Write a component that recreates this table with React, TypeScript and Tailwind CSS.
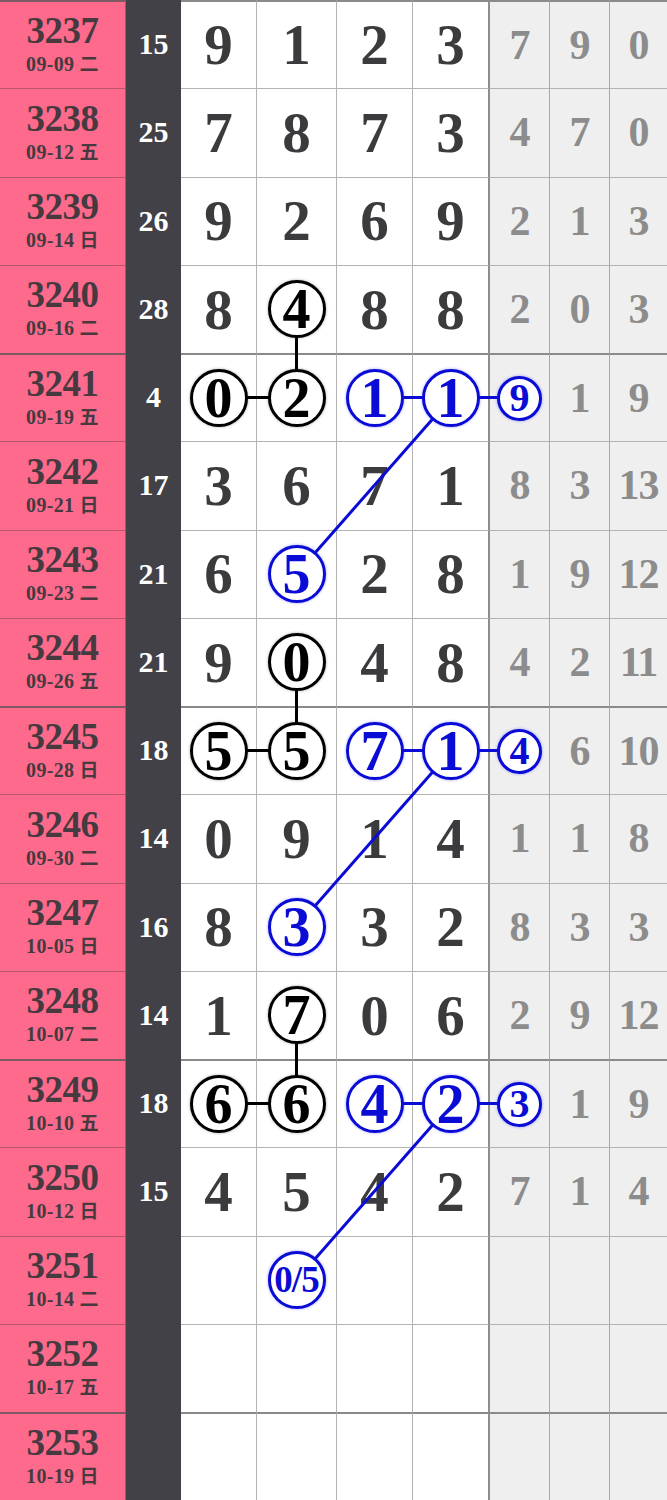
import React from 'react';
import { clsx, type ClassValue } from 'clsx';
import { twMerge } from 'tailwind-merge';

function cn(...inputs: ClassValue[]) {
    return twMerge(clsx(inputs));
}

interface Row {
    id: number;
    d: string;
    w: string;
    s?: number;
    m: string[];
    g: string[];
}

const ROW_H = 88.25;

// k = black circle, b = blue circle
const ROWS: Row[] = [
    { id: 3237, d: '09-09', w: '二', s: 15, m: ['9', '1', '2', '3'], g: ['7', '9', '0'] },
    { id: 3238, d: '09-12', w: '五', s: 25, m: ['7', '8', '7', '3'], g: ['4', '7', '0'] },
    { id: 3239, d: '09-14', w: '日', s: 26, m: ['9', '2', '6', '9'], g: ['2', '1', '3'] },
    { id: 3240, d: '09-16', w: '二', s: 28, m: ['8', 'k4', '8', '8'], g: ['2', '0', '3'] },
    { id: 3241, d: '09-19', w: '五', s: 4, m: ['k0', 'k2', 'b1', 'b1'], g: ['b9', '1', '9'] },
    { id: 3242, d: '09-21', w: '日', s: 17, m: ['3', '6', '7', '1'], g: ['8', '3', '13'] },
    { id: 3243, d: '09-23', w: '二', s: 21, m: ['6', 'b5', '2', '8'], g: ['1', '9', '12'] },
    { id: 3244, d: '09-26', w: '五', s: 21, m: ['9', 'k0', '4', '8'], g: ['4', '2', '11'] },
    { id: 3245, d: '09-28', w: '日', s: 18, m: ['k5', 'k5', 'b7', 'b1'], g: ['b4', '6', '10'] },
    { id: 3246, d: '09-30', w: '二', s: 14, m: ['0', '9', '1', '4'], g: ['1', '1', '8'] },
    { id: 3247, d: '10-05', w: '日', s: 16, m: ['8', 'b3', '3', '2'], g: ['8', '3', '3'] },
    { id: 3248, d: '10-07', w: '二', s: 14, m: ['1', 'k7', '0', '6'], g: ['2', '9', '12'] },
    { id: 3249, d: '10-10', w: '五', s: 18, m: ['k6', 'k6', 'b4', 'b2'], g: ['b3', '1', '9'] },
    { id: 3250, d: '10-12', w: '日', s: 15, m: ['4', '5', '4', '2'], g: ['7', '1', '4'] },
    { id: 3251, d: '10-14', w: '二', m: ['', 'b0/5', '', ''], g: ['', '', ''] },
    { id: 3252, d: '10-17', w: '五', m: ['', '', '', ''], g: ['', '', ''] },
    { id: 3253, d: '10-19', w: '日', m: ['', '', '', ''], g: ['', '', ''] },
];

const MAIN_W = ['w-[76px]', 'w-[80px]', 'w-[76px]', 'w-[77px]'];
const GRAY_W = ['w-[60px]', 'w-[60px]', 'w-[57px]'];

const Circle: React.FC<{ t: string; blue: boolean; small?: boolean }> = ({ t, blue, small }) => (
    <div
        className={cn(
            'relative z-20 flex items-center justify-center rounded-full bg-white border-[3px] leading-none font-bold',
            blue ? 'border-[#0b0bd6] text-[#0b0bd6] shadow-[0_0_3px_rgba(40,40,255,0.45)]' : 'border-black text-black shadow-[0_0_3px_rgba(0,0,0,0.35)]',
            small ? 'w-[45px] h-[45px] text-[40px]' : 'w-[58px] h-[58px] text-[56px]',
            t.length > 1 && 'text-[37px] tracking-[-1px]'
        )}
    >
        {t}
    </div>
);

const Value: React.FC<{ v: string; gray?: boolean; small?: boolean }> = ({ v, gray, small }) => {
    if (!v) return null;
    if (v[0] === 'k' || v[0] === 'b') return <Circle t={v.slice(1)} blue={v[0] === 'b'} small={small} />;
    return (
        <span className={cn('leading-none font-bold', gray ? 'text-[42px] text-[#8c8c8c] tracking-[-1px]' : 'text-[57px] text-[#3b3b3e]')}>
            {v}
        </span>
    );
};

// connector lines drawn over plain digits, under the circles
const Lines: React.FC = () => {
    const x1 = 218.5, x2 = 296.5, x3 = 375, x4 = 451.5, xg = 520;
    const cy = (i: number) => ROW_H * i + 44.5;
    const groups = [4, 8, 12];
    return (
        <svg className="pointer-events-none absolute left-0 top-0 z-10" width="667" height="1500">
            {groups.map(r => (
                <g key={r}>
                    <line x1={x2} y1={cy(r - 1)} x2={x2} y2={cy(r)} stroke="#000" strokeWidth="3" />
                    <line x1={x1} y1={cy(r)} x2={x2} y2={cy(r)} stroke="#000" strokeWidth="3" />
                    <line x1={x3} y1={cy(r)} x2={xg} y2={cy(r)} stroke="#0b0bd6" strokeWidth="3" />
                    <line x1={x4} y1={cy(r)} x2={x2} y2={cy(r + 2)} stroke="#0b0bd6" strokeWidth="3" />
                </g>
            ))}
        </svg>
    );
};

export default function App() {
    return (
        <div className="relative w-[667px] h-[1500px] bg-white overflow-hidden font-['Liberation_Serif','Noto_Sans_CJK_SC',serif]">
            <Lines />
            {ROWS.map((r, i) => {
                const group = i % 4 === 0;
                const line = group ? 'border-t-2 border-t-[#8a8a8a]' : 'border-t border-t-[#b3b3b3]';
                return (
                    <div key={r.id} className="flex h-[88.25px]">
                        <div
                            className={cn(
                                'w-[126px] shrink-0 bg-[#fe6a8c] border-r border-r-[#a65567] flex flex-col items-center justify-center gap-[4px] pb-[4px] text-[#463a40] font-bold leading-none',
                                group ? 'border-t-2 border-t-[#7a5a63]' : 'border-t border-t-[#b8566c]'
                            )}
                        >
                            <span className="text-[37px] tracking-[-0.5px]">{r.id}</span>
                            <span className="text-[20px] tracking-[0.3px]">
                                {r.d} <span className="font-['Noto_Sans_CJK_SC',sans-serif] text-[19px] font-bold">{r.w}</span>
                            </span>
                        </div>
                        <div className="w-[55px] shrink-0 bg-[#414147] flex items-center justify-center text-white font-bold text-[30px] leading-none">
                            {r.s ?? ''}
                        </div>
                        {r.m.map((v, j) => (
                            <div
                                key={j}
                                className={cn(
                                    MAIN_W[j],
                                    'shrink-0 flex items-center justify-center bg-white',
                                    line,
                                    j < 3 ? 'border-r border-r-[#b3b3b3]' : 'border-r-2 border-r-[#8e8e8e]'
                                )}
                            >
                                <Value v={v} />
                            </div>
                        ))}
                        {r.g.map((v, j) => (
                            <div
                                key={j}
                                className={cn(
                                    GRAY_W[j],
                                    'shrink-0 flex items-center justify-center bg-[#efefef]',
                                    line,
                                    j < 2 && 'border-r border-r-[#a8a8a8]'
                                )}
                            >
                                <Value v={v} gray small />
                            </div>
                        ))}
                    </div>
                );
            })}
        </div>
    );
}
